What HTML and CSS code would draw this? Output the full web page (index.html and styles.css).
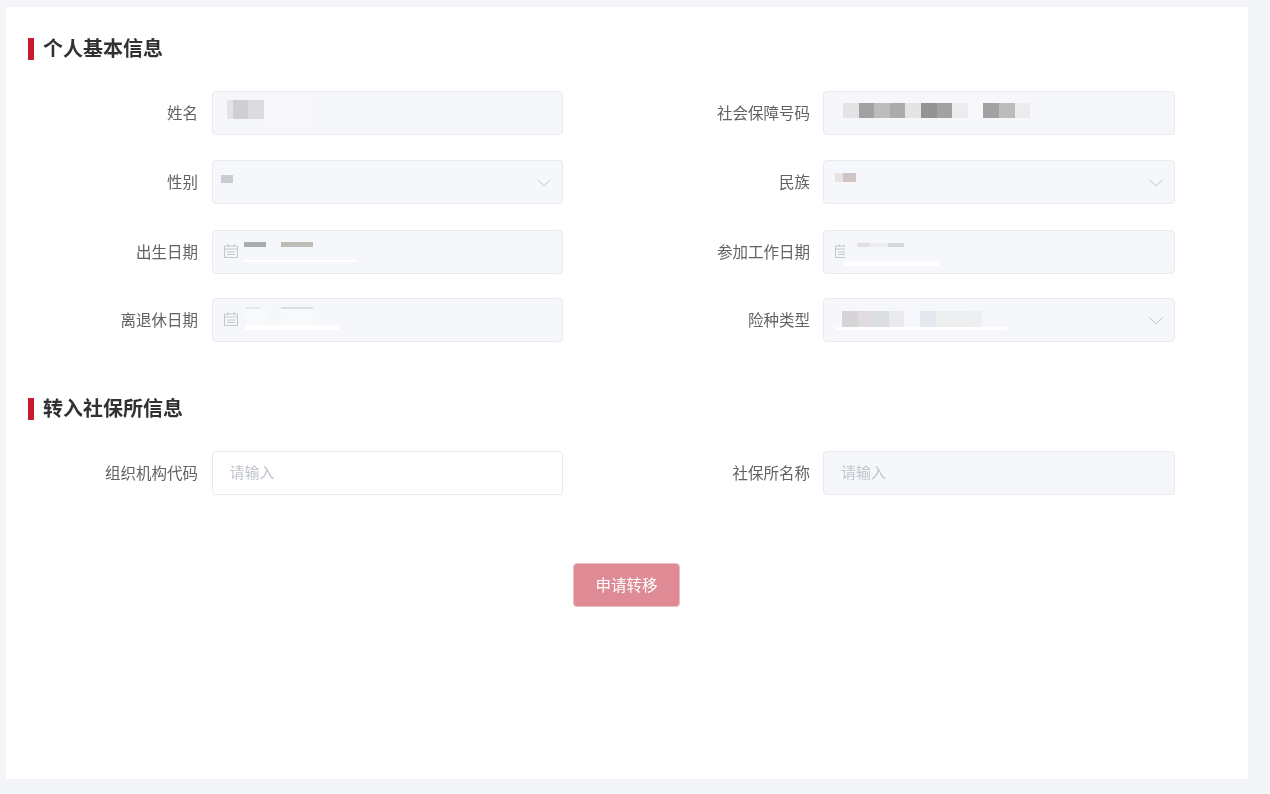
FILE: index.html
```html
<!DOCTYPE html>
<html>
	<head>
		<title>转移申请</title>
		<link rel="stylesheet" href="styles.css">
	</head>
	<body>
		<div class="card">
			<h2 class="title">个人基本信息</h2>
			<div class="form form-base">
				<div class="field">
					<label>姓名</label>
					<div class="input disabled">
						<div class="patch patch-name"></div>
						<div class="mask mask-name"><i class="c2"></i><i class="c4"></i><i class="c3"></i></div>
					</div>
				</div>
				<div class="field">
					<label>社会保障号码</label>
					<div class="input disabled">
						<div class="mask mask-ssn">
							<i class="c2"></i><i class="c8"></i><i class="c6"></i><i class="c7"></i><i class="c2"></i><i class="c9"></i>
							<i class="c8"></i><i class="c1"></i><i class="c0"></i><i class="c8"></i><i class="c6"></i><i class="c1"></i>
						</div>
					</div>
				</div>
				<div class="field">
					<label>性别</label>
					<div class="input disabled">
						<div class="mask mask-gender"></div>
						<svg class="arrow" viewBox="0 0 14 8"><path d="M0.5 0.5 L7 7 L13.5 0.5"/></svg>
					</div>
				</div>
				<div class="field">
					<label>民族</label>
					<div class="input disabled">
						<div class="mask mask-nation"><i class="n1"></i><i class="n2"></i></div>
						<svg class="arrow" viewBox="0 0 14 8"><path d="M0.5 0.5 L7 7 L13.5 0.5"/></svg>
					</div>
				</div>
				<div class="field">
					<label>出生日期</label>
					<div class="input disabled">
						<svg class="cal" viewBox="0 0 14 15"><path d="M0.5 3 H13.5 V14.5 H0.5 Z M0.5 6 H13.5 M4 1 V4 M10 1 V4 M3 9 H11 M3 11.5 H11"/></svg>
						<div class="bars bars-birth"><b class="b1"></b><b class="b2"></b></div>
						<div class="strip strip-birth"></div>
					</div>
				</div>
				<div class="field">
					<label>参加工作日期</label>
					<div class="input disabled">
						<svg class="cal" viewBox="0 0 14 15"><path d="M0.5 3 H13.5 V14.5 H0.5 Z M0.5 6 H13.5 M4 1 V4 M10 1 V4 M3 9 H11 M3 11.5 H11"/></svg>
						<div class="patch patch-work"></div>
						<div class="bars bars-work"><b class="b3"></b><b class="b4"></b><b class="b5"></b></div>
						<div class="strip strip-work"></div>
					</div>
				</div>
				<div class="field">
					<label>离退休日期</label>
					<div class="input disabled">
						<svg class="cal" viewBox="0 0 14 15"><path d="M0.5 3 H13.5 V14.5 H0.5 Z M0.5 6 H13.5 M4 1 V4 M10 1 V4 M3 9 H11 M3 11.5 H11"/></svg>
						<div class="patch patch-retire-a"></div>
						<div class="patch patch-retire-b"></div>
						<div class="bars bars-retire"><b class="b6"></b><b class="b7"></b></div>
						<div class="strip strip-retire"></div>
					</div>
				</div>
				<div class="field">
					<label>险种类型</label>
					<div class="input disabled">
						<div class="mask mask-type">
							<i class="t1"></i><i class="t2"></i><i class="t3"></i><i class="t4"></i><i class="t5"></i>
							<i class="t6"></i><i class="t7"></i><i class="t7"></i><i class="t8"></i>
						</div>
						<div class="strip strip-type"></div>
						<svg class="arrow" viewBox="0 0 14 8"><path d="M0.5 0.5 L7 7 L13.5 0.5"/></svg>
					</div>
				</div>
			</div>

			<h2 class="title second">转入社保所信息</h2>
			<div class="form">
				<div class="field">
					<label>组织机构代码</label>
					<div class="input"><span class="holder">请输入</span></div>
				</div>
				<div class="field">
					<label>社保所名称</label>
					<div class="input disabled"><span class="holder">请输入</span></div>
				</div>
			</div>

			<div class="actions">
				<button class="btn">申请转移</button>
			</div>
		</div>
	</body>
</html>
```
FILE: styles.css
```css
* { box-sizing: border-box; }

body {
	margin: 0;
	padding: 7px 22px 15px 6px;
	height: 794px;
	overflow: hidden;
	background-color: #f4f5f8;
	font-family: "Noto Sans CJK SC", "Liberation Sans", sans-serif;
}

.card {
	height: 772px;
	padding: 31px 22px 0;
	background: #fff;
	filter: blur(0.5px);
}

.title {
	display: flex;
	align-items: flex-start;
	height: 22px;
	margin: 0 0 31px;
	font-size: 20px;
	line-height: 19px;
	font-weight: 700;
	color: #303133;
}
.title:before {
	content: "";
	flex: none;
	width: 6px;
	height: 22px;
	margin-right: 9px;
	background: #c8192f;
}
.title.second { margin-top: 56px; }

.form {
	display: grid;
	grid-template-columns: 611.5px 611.5px;
	align-items: start;
}
.form-base { grid-template-rows: 69px 70px 68px 44px; }

.field { display: flex; align-items: center; }
.field label {
	width: 170px;
	margin-right: 13.5px;
	padding-bottom: 3px;
	text-align: right;
	font-size: 15.5px;
	color: #606266;
}
.field:nth-child(even) label { width: 170.5px; margin-right: 13px; }

.input {
	position: relative;
	display: flex;
	align-items: center;
	width: 351.5px;
	height: 44px;
	padding: 0 17px 3px;
	background: #fff;
	border: 1px solid #e8eaef;
	border-radius: 4px;
}
.input.disabled { background: #f5f7fa; }
.holder { font-size: 15px; color: #c0c4cc; }

.arrow {
	position: absolute;
	right: 11px;
	top: 18px;
	width: 14px;
	height: 8px;
	fill: none;
	stroke: #c0c4cc;
}
.cal {
	position: absolute;
	left: 11px;
	top: 12px;
	width: 14px;
	height: 15px;
	fill: none;
	stroke: #c3c7cf;
}

/* blurred-out values */
.mask { position: absolute; display: flex; height: 19px; }
.mask i { display: block; width: 15.6px; }
.mask-name { left: 14px; top: 8px; }
.mask-name .c2 { width: 6px; }
.mask-ssn { left: 19px; top: 11px; height: 15px; }
.mask-gender { left: 8px; top: 14px; width: 12px; height: 8px; background: #c9ccd3; }
.mask-nation { left: 11px; top: 12px; height: 9px; }
.mask-nation .n1 { width: 8px; background: #e6e3e3; }
.mask-nation .n2 { width: 13px; background: #cfc5c5; }
.mask-type { left: 18px; top: 12px; height: 16px; }

.c0 { background: #f7f8fb; }
.c1 { background: #ececee; }
.c2 { background: #e4e4e6; }
.c3 { background: #dcdcde; }
.c4 { background: #cfcfd1; }
.c6 { background: #bcbcbc; }
.c7 { background: #ababab; }
.c8 { background: #a2a2a2; }
.c9 { background: #939393; }

.t1 { background: #d6d4d6; }
.t2 { background: #dedcde; }
.t3 { background: #dadde2; }
.t4 { background: #eaeaec; }
.t5 { background: #f7f8fb; }
.t6 { background: #e4e9ef; }
.t7 { background: #eceef0; }
.t8 { background: #eeeff0; }

.bars { position: absolute; display: flex; height: 5px; }
.bars b { display: block; height: 100%; }
.bars-birth { left: 31px; top: 11px; }
.b1 { width: 22px; margin-right: 15px; background: #a9abb0; }
.b2 { width: 32px; background: #bdbcb8; }
.bars-work { left: 33px; top: 12px; height: 4px; }
.b3 { width: 13px; background: #e3dfe3; }
.b4 { width: 18px; background: #eeeef0; }
.b5 { width: 16px; background: #d5d8dc; }
.bars-retire { left: 33px; top: 8px; height: 2px; }
.b6 { width: 14px; margin-right: 21px; background: #e6e7ea; }
.b7 { width: 32px; background: #dcdde0; }

.patch { position: absolute; background: #f5f7fa; }
.patch-work { left: 21px; top: 8px; width: 14px; height: 26px; }
.patch-name { left: 51px; top: 8px; width: 47px; height: 24px; background: #f8f8fa; }
.patch-retire-a { left: 33px; top: 10px; width: 20px; height: 16px; background: #f8f9fb; }
.patch-retire-b { left: 68px; top: 10px; width: 32px; height: 16px; background: #f8f9fb; }

.strip { position: absolute; background: #fff; }
.strip-birth { left: 31px; top: 29px; width: 113px; height: 2px; }
.strip-work { left: 20px; top: 30px; width: 95px; height: 5px; }
.strip-retire { left: 32px; top: 26px; width: 94px; height: 5px; }
.strip-type { left: 12px; top: 28px; width: 171px; height: 3px; }

.actions { display: flex; justify-content: center; margin-top: 68px; padding-right: 1px; }
.btn {
	width: 107px;
	height: 44px;
	padding: 0 0 3px;
	border: 1px solid #ebbcc2;
	border-radius: 4px;
	background: #de8b96;
	color: #fff;
	font-family: inherit;
	font-size: 15.5px;
}
```
